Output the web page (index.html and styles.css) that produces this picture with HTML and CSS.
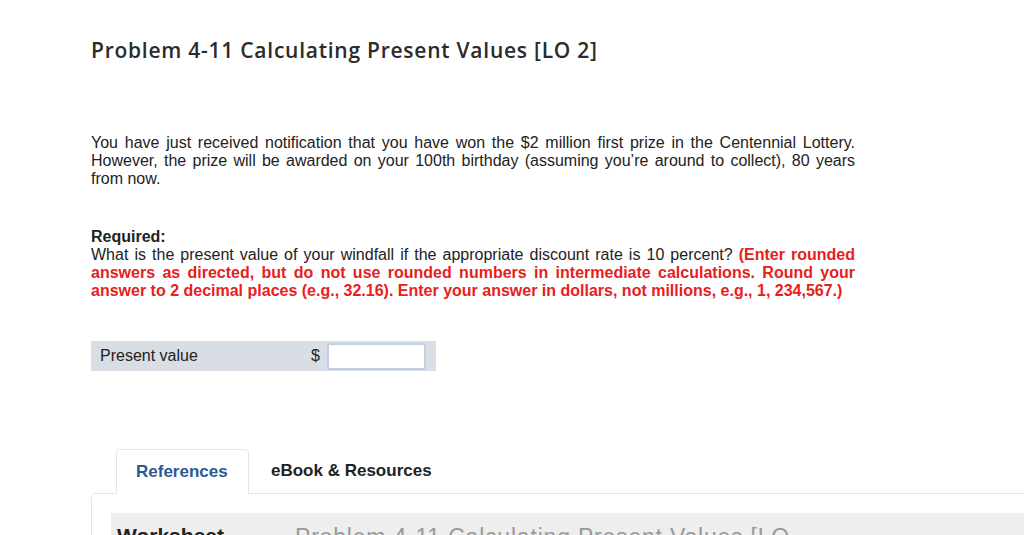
FILE: index.html
```html
<!DOCTYPE html>
<html>
<head>
<meta charset="utf-8">
<link rel="stylesheet" href="styles.css">
</head>
<body>
<div class="page">
  <h1 class="title">Problem 4-11 Calculating Present Values [LO 2]</h1>
  <p class="intro">You have just received notification that you have won the $2 million first prize in the Centennial Lottery. However, the prize will be awarded on your 100th birthday (assuming you’re around to collect), 80 years from now.</p>
  <div class="required">
    <div class="req-label">Required:</div>
    <p class="req-text">What is the present value of your windfall if the appropriate discount rate is 10 percent? <span class="hint">(Enter rounded answers as directed, but do not use rounded numbers in intermediate calculations. Round your answer to 2 decimal places (e.g., 32.16). Enter your answer in dollars, not millions, e.g., 1, 234,567.)</span></p>
  </div>
  <div class="answer-row">
    <span class="answer-label">Present value</span>
    <span class="dollar">$</span>
    <span class="answer-input"></span>
  </div>
  <div class="tabs">
    <div class="tab active">References</div>
    <div class="tab">eBook &amp; Resources</div>
  </div>
  <div class="panel">
    <div class="panel-bar">
      <span class="bar-label">Worksheet</span>
      <span class="bar-value">Problem 4-11 Calculating Present Values [LO 2]</span>
    </div>
  </div>
</div>
</body>
</html>
```

FILE: styles.css
```css
html, body {
  margin: 0;
  padding: 0;
  overflow: hidden;
  background: #ffffff;
}
body {
  font-family: "Liberation Sans", Arial, sans-serif;
  color: #222;
}
.page {
  padding-left: 91px;
  width: 1000px;
}
.title {
  margin: 0;
  padding-top: 36px;
  font-family: "Open Sans", sans-serif;
  font-weight: 600;
  font-size: 21px;
  line-height: 28px;
  color: #2b2b2b;
  letter-spacing: 0.75px;
}
.intro {
  width: 764px;
  margin: 70px 0 0 0;
  font-size: 16px;
  line-height: 18px;
  text-align: justify;
  color: #222;
}
.required {
  width: 764px;
  margin-top: 40px;
  font-size: 16px;
  line-height: 18px;
}
.req-label {
  font-weight: bold;
}
.req-text {
  margin: 0;
  text-align: justify;
}
.hint {
  color: #e8201c;
  font-weight: bold;
}
.answer-row {
  margin-top: 41px;
  width: 345px;
  height: 30px;
  background: #d9dde4;
  display: flex;
  align-items: center;
  font-size: 16px;
  color: #222;
}
.answer-label {
  padding-left: 9px;
  width: 211px;
}
.dollar {
  width: 16px;
}
.answer-input {
  box-sizing: border-box;
  width: 99px;
  height: 27px;
  background: #fff;
  border: 2px solid #c3cfe6;
  border-radius: 2px;
}
.tabs {
  margin-top: 78px;
  padding-left: 25px;
  display: flex;
  height: 44px;
  position: relative;
  z-index: 1;
}
.tab {
  box-sizing: border-box;
  height: 44px;
  padding: 0 22px;
  display: flex;
  align-items: center;
  font-size: 17px;
  font-weight: bold;
  color: #222;
}
.tab.active {
  width: 133px;
  padding: 0 0 0 19px;
  color: #2c5a93;
  background: #fff;
  border: 1px solid #e6e6e6;
  border-bottom: none;
  border-radius: 4px 4px 0 0;
  height: 45px;
}
.panel {
  margin-top: 0;
  border: 1px solid #e6e6e6;
  border-radius: 4px 0 0 0;
  padding: 19px 0 0 19px;
  height: 60px;
}
.panel-bar {
  background: #eeeeee;
  height: 60px;
  padding: 11px 0 0 6px;
  display: flex;
  align-items: flex-start;
}
.bar-label {
  font-weight: bold;
  font-size: 21px;
  width: 178px;
  color: #222;
}
.bar-value {
  font-size: 23px;
  letter-spacing: 0.8px;
  width: 515px;
  color: #999;
}
```
